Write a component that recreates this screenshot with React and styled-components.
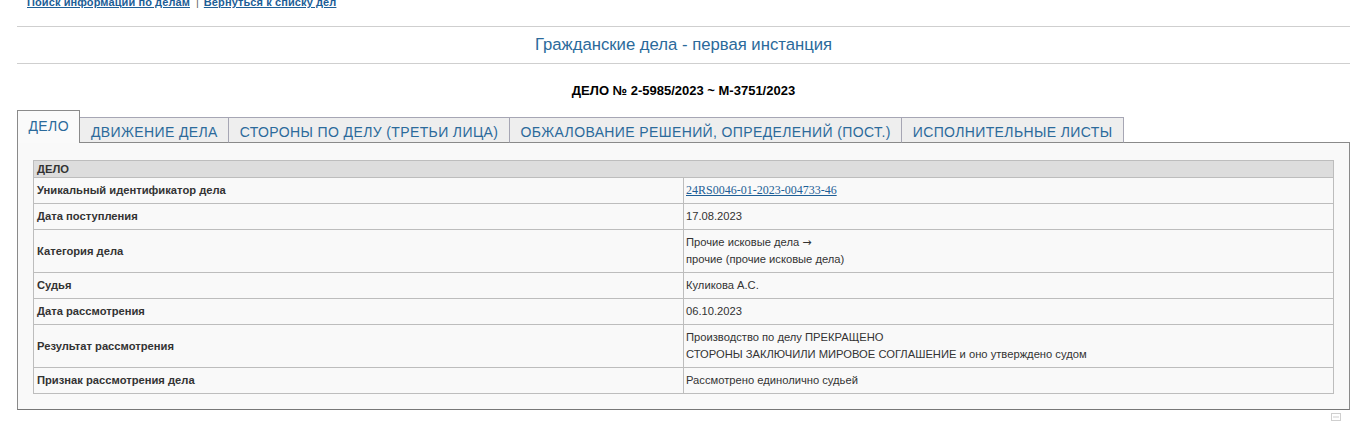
import React from "react";
import styled, { createGlobalStyle } from "styled-components";

const Global = createGlobalStyle`
  html, body { margin: 0; padding: 0; background: #fff; }
  body { font-family: "Liberation Sans", Arial, sans-serif; overflow: hidden; }
`;

const Wrapper = styled.div`
  margin: 0 8px 0 17px;
`;

const LinksRow = styled.div`
  margin-top: -5px;
  padding-left: 10px;
  height: 14px;
  font-size: 11px;
  line-height: 14px;
  font-weight: bold;
  color: #777;
`;

const TopLink = styled.a`
  color: #1d5e96;
  text-decoration: underline;
  letter-spacing: 0.1px;
`;

const Sep = styled.span`
  font-weight: normal;
  margin: 0 5px 0 6px;
  color: #666;
`;

const Divider = styled.div`
  height: 1px;
  background: #cfcfcf;
  margin-top: ${(p) => p.$top || 0}px;
`;

const Title = styled.div`
  height: 36px;
  line-height: 35px;
  text-align: center;
  font-size: 16.7px;
  color: #2b6a9b;
`;

const CaseNo = styled.div`
  text-align: center;
  font-size: 13px;
  font-weight: bold;
  color: #000;
  margin-top: 19px;
  line-height: 15px;
`;

const Tabs = styled.div`
  display: flex;
  align-items: flex-end;
  margin-top: 12px;
  position: relative;
  z-index: 1;
`;

const Tab = styled.div`
  box-sizing: border-box;
  font-family: "Liberation Sans", Arial, sans-serif;
  font-size: 14px;
  color: #2b6a9b;
  text-transform: uppercase;
  white-space: nowrap;
  border: 1px solid ${(p) => (p.$active ? "#8a8a8a" : "#a6a6b4")};
  border-left-width: ${(p) => (p.$first || p.$active ? 1 : 0)}px;
  border-bottom: ${(p) => (p.$active ? "none" : "1px solid #8a8a8a")};
  background: ${(p) => (p.$active ? "#fafafa" : "#eeeeee")};
  height: ${(p) => (p.$active ? 33 : 26)}px;
  padding: ${(p) => (p.$active ? "6px 10.5px 0" : "5px 10.5px 0")};
  line-height: 18px;
  margin-bottom: -1px;
  letter-spacing: 0.38px;
`;

const Panel = styled.div`
  border: 1px solid #8a8a8a;
  border-bottom-color: #777;
  background: #f9f9f9;
  padding: 17px 15px 15px 15px;
`;

const Table = styled.table`
  width: 100%;
  border-collapse: collapse;
  font-size: 11.2px;
  color: #333;
`;

const HeadCell = styled.th`
  background: #dddddd;
  border: 1px solid #bdbdbd;
  text-align: left;
  font-weight: bold;
  padding: 1px 3px 1px;
  height: 17px;
  line-height: 14px;
  box-sizing: border-box;
`;

const LabelCell = styled.td`
  width: 643px;
  border: 1px solid #bdbdbd;
  font-weight: bold;
  padding: 4px 3px;
  line-height: 17px;
  vertical-align: middle;
`;

const ValueCell = styled.td`
  border: 1px solid #bdbdbd;
  padding: 4px 2px;
  line-height: 17px;
  vertical-align: middle;
`;

const Arrow = styled.span`
  font-family: "DejaVu Sans", sans-serif;
  font-size: 11px;
`;

const IdLink = styled.a`
  font-family: "Liberation Serif", "Times New Roman", serif;
  font-size: 12px;
  color: #1d5e96;
  text-decoration: underline;
`;

const Footer = styled.div`
  display: flex;
  justify-content: flex-end;
  padding: 3px 9px 0 0;
`;

const rows = [
  ["Уникальный идентификатор дела", <IdLink href="#">24RS0046-01-2023-004733-46</IdLink>],
  ["Дата поступления", "17.08.2023"],
  ["Категория дела", <>Прочие исковые дела <Arrow>→</Arrow><br />прочие (прочие исковые дела)</>],
  ["Судья", "Куликова А.С."],
  ["Дата рассмотрения", "06.10.2023"],
  [
    "Результат рассмотрения",
    <>Производство по делу ПРЕКРАЩЕНО<br />СТОРОНЫ ЗАКЛЮЧИЛИ МИРОВОЕ СОГЛАШЕНИЕ и оно утверждено судом</>,
  ],
  ["Признак рассмотрения дела", "Рассмотрено единолично судьей"],
];

const tabs = [
  "Дело",
  "Движение дела",
  "Стороны по делу (третьи лица)",
  "Обжалование решений, определений (пост.)",
  "Исполнительные листы",
];

export default function App() {
  return (
    <>
      <Global />
      <Wrapper>
        <LinksRow>
          <TopLink href="#">Поиск информации по делам</TopLink>
          <Sep>|</Sep>
          <TopLink href="#">Вернуться к списку дел</TopLink>
        </LinksRow>
        <Divider $top={17} />
        <Title>Гражданские дела - первая инстанция</Title>
        <Divider />
        <CaseNo>ДЕЛО № 2-5985/2023 ~ М-3751/2023</CaseNo>
        <Tabs>
          {tabs.map((t, i) => (
            <Tab key={t} $active={i === 0} $first={i === 0}>
              {t}
            </Tab>
          ))}
        </Tabs>
        <Panel>
          <Table>
            <thead>
              <tr>
                <HeadCell colSpan={2}>ДЕЛО</HeadCell>
              </tr>
            </thead>
            <tbody>
              {rows.map(([label, value]) => (
                <tr key={label}>
                  <LabelCell>{label}</LabelCell>
                  <ValueCell>{value}</ValueCell>
                </tr>
              ))}
            </tbody>
          </Table>
        </Panel>
        <Footer>
          <svg width="10" height="8" viewBox="0 0 10 8">
            <rect x="0.5" y="0.5" width="9" height="7" fill="none" stroke="#cfcfcf" />
            <line x1="2" y1="4" x2="8" y2="4" stroke="#cfcfcf" />
          </svg>
        </Footer>
      </Wrapper>
    </>
  );
}
